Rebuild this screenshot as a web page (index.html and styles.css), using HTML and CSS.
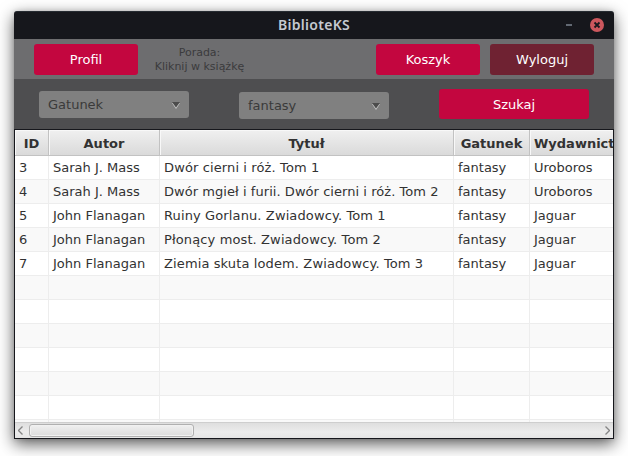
FILE: index.html
```html
<!DOCTYPE html>
<html lang="pl">
<head>
<meta charset="utf-8">
<title>BiblioteKS</title>
<link rel="stylesheet" href="styles.css">
</head>
<body>
<div class="window">
  <header class="titlebar">
    <span class="title">BiblioteKS</span>
    <div class="controls">
      <span class="minimize"></span>
      <svg class="close" width="14" height="14" viewBox="0 0 14 14"><circle cx="7" cy="7" r="7" fill="#cc575d"/><path d="M4.5 4.5l5 5M9.5 4.5l-5 5" stroke="#17181d" stroke-width="1.8"/></svg>
    </div>
  </header>
  <nav class="toolbar">
    <button class="btn">Profil</button>
    <p class="tip">Porada:<br>Kliknij w książkę</p>
    <button class="btn">Koszyk</button>
    <button class="btn logout">Wyloguj</button>
  </nav>
  <section class="filters">
    <div class="combo">Gatunek<svg class="arrow" width="8" height="7" viewBox="0 0 8 7"><path d="M0 1h8L4 7z" fill="#c8c8c8"/><path d="M0 0h8L4 5.5z" fill="#4c4c4c"/></svg></div>
    <div class="combo genre">fantasy<svg class="arrow" width="8" height="7" viewBox="0 0 8 7"><path d="M0 1h8L4 7z" fill="#c8c8c8"/><path d="M0 0h8L4 5.5z" fill="#4c4c4c"/></svg></div>
    <button class="btn search">Szukaj</button>
  </section>
  <main class="table">
    <div class="row head"><span>ID</span><span>Autor</span><span>Tytuł</span><span>Gatunek</span><span>Wydawnictwo</span></div>
    <div class="rows">
      <div class="row"><span>3</span><span>Sarah J. Mass</span><span>Dwór cierni i róż. Tom 1</span><span>fantasy</span><span>Uroboros</span></div>
      <div class="row"><span>4</span><span>Sarah J. Mass</span><span class="long">Dwór mgieł i furii. Dwór cierni i róż. Tom 2</span><span>fantasy</span><span>Uroboros</span></div>
      <div class="row"><span>5</span><span>John Flanagan</span><span>Ruiny Gorlanu. Zwiadowcy. Tom 1</span><span>fantasy</span><span>Jaguar</span></div>
      <div class="row"><span>6</span><span>John Flanagan</span><span>Płonący most. Zwiadowcy. Tom 2</span><span>fantasy</span><span>Jaguar</span></div>
      <div class="row"><span>7</span><span>John Flanagan</span><span>Ziemia skuta lodem. Zwiadowcy. Tom 3</span><span>fantasy</span><span>Jaguar</span></div>
      <div class="row"><span></span><span></span><span></span><span></span><span></span></div>
      <div class="row"><span></span><span></span><span></span><span></span><span></span></div>
      <div class="row"><span></span><span></span><span></span><span></span><span></span></div>
      <div class="row"><span></span><span></span><span></span><span></span><span></span></div>
      <div class="row"><span></span><span></span><span></span><span></span><span></span></div>
      <div class="row"><span></span><span></span><span></span><span></span><span></span></div>
      <div class="row"><span></span><span></span><span></span><span></span><span></span></div>
    </div>
    <div class="scrollbar">
      <svg width="5" height="9" viewBox="0 0 5 9"><path d="M4.5 .5l-4 4 4 4" fill="none" stroke="#858585" stroke-width="1.3"/></svg>
      <div class="thumb"></div>
      <svg class="right" width="5" height="9" viewBox="0 0 5 9"><path d="M.5 .5l4 4-4 4" fill="none" stroke="#858585" stroke-width="1.3"/></svg>
    </div>
  </main>
</div>
</body>
</html>
```
FILE: styles.css
```css
* { box-sizing: border-box; }
body {
  margin: 0;
  height: 456px;
  padding: 11px 14px 0;
  overflow: hidden;
  background: #fff;
  font: 13px/15px "DejaVu Sans", sans-serif;
  color: #323232;
}
.window {
  width: 600px;
  height: 428px;
  border-radius: 3px 3px 0 0;
  box-shadow: 0 5px 16px rgba(0, 0, 0, .65), 0 0 5px rgba(0, 0, 0, .12);
}
.titlebar {
  height: 28px;
  display: grid;
  grid-template-columns: 1fr auto 1fr;
  align-items: center;
  padding-right: 10px;
  border-top: 1px solid #262b31;
  border-radius: 3px 3px 0 0;
  background: #16171c;
}
.title {
  grid-column: 2;
  padding: 0 0 2px 10px;
  font: 600 14px/20px "Noto Sans", sans-serif;
  letter-spacing: .3px;
  color: #c5c9d1;
}
.controls { display: flex; justify-content: flex-end; align-items: center; gap: 18px; padding-bottom: 1px; }
.minimize { width: 6px; height: 2px; background: #626973; }
.toolbar {
  height: 40px;
  display: flex;
  padding: 5px 20px 0;
  background: #6d6d6f;
}
.btn {
  width: 104px;
  height: 31px;
  padding: 0;
  border: 0;
  border-radius: 3px;
  background: #c3063f;
  color: #fff;
  font: inherit;
}
.logout { margin-left: 10px; background: #6f2232; }
.tip {
  width: 123px;
  margin: 2px 115px 0 0;
  font-size: 11px;
  line-height: 14px;
  text-align: center;
  color: #3b3b3d;
}
.filters {
  height: 50px;
  display: flex;
  align-items: flex-start;
  padding: 10px 25px 0;
  background: #4e4e50;
}
.combo {
  width: 150px;
  height: 27px;
  display: flex;
  align-items: center;
  justify-content: space-between;
  margin: 2px 50px 0 0;
  padding: 0 9px;
  border-radius: 3px;
  background: #808080;
  color: #3a3a3a;
}
.genre { margin-top: 3px; }
.arrow { margin-top: 1px; }
.search { width: 150px; height: 30px; }
.table {
  height: 310px;
  display: flex;
  flex-direction: column;
  border: 1px solid #16171c;
  background: #fff;
  overflow: hidden;
}
.row {
  height: 24px;
  display: grid;
  grid-template-columns: 34px 111px 294px 76px 100px;
}
.row span {
  padding: 4px 4px 0;
  border-right: 1px solid #ededed;
  border-bottom: 1px solid #ededed;
  white-space: nowrap;
}
.row:nth-child(even) { background: #f9f9f9; }
.rows span:nth-child(3) { letter-spacing: .12px; }
.rows .long:nth-child(3) { letter-spacing: .05px; }
.head {
  flex: none;
  height: 26px;
  font-weight: bold;
  text-align: center;
  background: linear-gradient(#f0f0f0, #d9d9d9);
}
.head span {
  padding-top: 6px;
  border-color: #c2c2c2;
  box-shadow: inset 1px 1px #f8f8f8;
}
.rows { height: 266px; overflow: hidden; }
.scrollbar {
  flex: none;
  height: 16px;
  display: flex;
  align-items: center;
  padding: 0 3px;
  border-top: 1px solid #cecece;
  background: linear-gradient(#dedede, #ececec 60%, #e5e5e5);
}
.thumb {
  width: 165px;
  height: 13px;
  margin-left: 6px;
  border: 1px solid #b0b0b0;
  border-radius: 3px;
  background: linear-gradient(#f0f0f0, #dcdcdc);
  box-shadow: inset 0 0 0 1px #f1f1f1;
}
.right { margin-left: auto; }
```
